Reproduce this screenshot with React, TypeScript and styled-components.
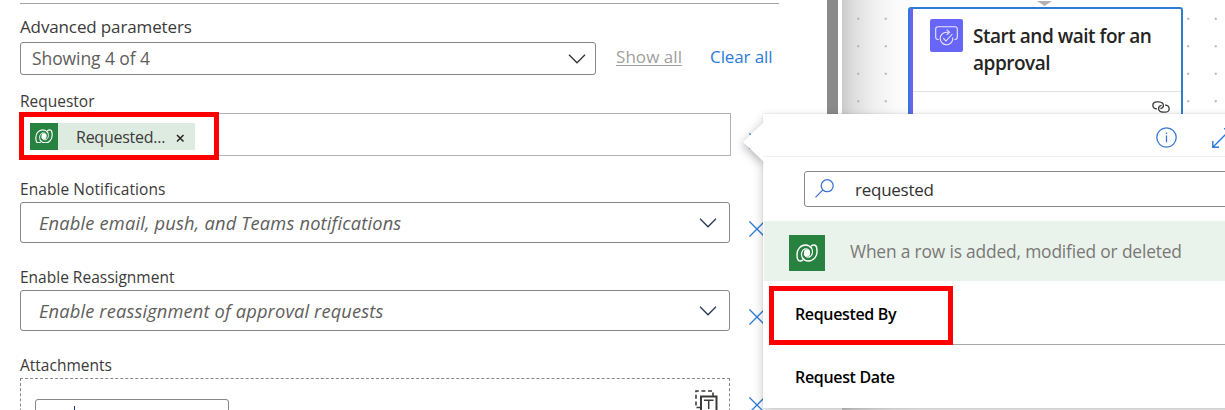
import React from "react";
import styled, { createGlobalStyle } from "styled-components";

const GlobalStyle = createGlobalStyle`
  * { box-sizing: border-box; }
  body {
    margin: 0;
    background: #fff;
    overflow: hidden;
    font-family: "Open Sans", "Noto Sans", sans-serif;
    color: #323130;
  }
`;

const Screen = styled.div`
  position: relative;
  display: flex;
  width: 1225px;
  height: 410px;
  overflow: hidden;
  background: #fff;
`;

const Text = styled.span<{ $size: number; $track?: number; $color?: string; $weight?: number }>`
  font-size: ${(p) => p.$size}px;
  letter-spacing: ${(p) => p.$track ?? 0}px;
  color: ${(p) => p.$color ?? "#3b3a39"};
  font-weight: ${(p) => p.$weight ?? 400};
  line-height: 22px;
  white-space: nowrap;
`;

const Panel = styled.section`
  display: flex;
  flex-direction: column;
  width: 827px;
  padding: 3px 0 0 20px;
  flex: none;
`;

const Rule = styled.div`
  width: 759px;
  height: 1px;
  background: #a3a3a3;
  margin-bottom: 1px;
  flex: none;
`;

const LabelRow = styled.div<{ $height: number; $gap: number }>`
  display: flex;
  align-items: flex-end;
  flex: none;
  height: ${(p) => p.$height}px;
  padding-bottom: ${(p) => p.$gap}px;
`;

const FilterRow = styled.div`
  display: flex;
  height: 33px;
  flex: none;
`;

const Select = styled.div<{ $width: number; $pad: number; $right: number }>`
  display: flex;
  align-items: center;
  justify-content: space-between;
  width: ${(p) => p.$width}px;
  height: 100%;
  padding: 0 ${(p) => p.$right}px 0 ${(p) => p.$pad}px;
  border: 1px solid #8a8886;
  border-radius: 3px;
  flex: none;
`;

const Value = styled(Text)`
  padding-bottom: 2px;
`;

const Hint = styled(Text)`
  font-style: italic;
`;

const LinkButton = styled.button<{ $disabled?: boolean; $gap: number }>`
  border: 0;
  padding: 0 0 4px;
  margin: 0 0 0 ${(p) => p.$gap}px;
  background: none;
  font: 400 17px/22px "Open Sans", sans-serif;
  letter-spacing: ${(p) => (p.$disabled ? 0.06 : -0.13)}px;
  color: ${(p) => (p.$disabled ? "#a19f9d" : "#2b7cd9")};
  text-decoration: ${(p) => (p.$disabled ? "underline" : "none")};
  text-underline-offset: 2px;
  white-space: nowrap;
`;

const FieldRow = styled.div<{ $height: number }>`
  display: flex;
  align-items: center;
  height: ${(p) => p.$height}px;
  flex: none;
`;

const TokenInput = styled.div`
  display: flex;
  align-items: center;
  width: 711px;
  height: 43px;
  padding: 3px 0 0 9px;
  border: 1px solid #b3b3b3;
  flex: none;
`;

const RemoveSlot = styled.div<{ $gap: number; $top: number }>`
  display: flex;
  align-items: center;
  padding-top: ${(p) => p.$top}px;
  margin-left: ${(p) => p.$gap}px;
`;

const Token = styled.span`
  display: flex;
  align-items: center;
  width: 165px;
  height: 27px;
  background: #deebe0;
`;

const Brand = styled.span<{ $w: number; $h: number }>`
  display: flex;
  align-items: center;
  justify-content: center;
  width: ${(p) => p.$w}px;
  height: ${(p) => p.$h}px;
  background: #27823f;
  flex: none;
`;

const TokenText = styled(Text)`
  width: 100px;
  margin-left: 18px;
  padding-top: 2px;
`;

const TokenClose = styled.span`
  line-height: 0;
  padding-top: 4px;
`;

const Attachments = styled.div`
  display: flex;
  justify-content: space-between;
  width: 710px;
  height: 54px;
  padding: 20px 11px 0 14px;
  border: 1px dashed #8a8886;
  flex: none;
`;

const ItemBox = styled.div`
  width: 194px;
  height: 32px;
  padding: 6px 0 0 38px;
  border: 1px solid #8a8886;
  border-radius: 3px;
`;

const Caret = styled.div`
  width: 1px;
  height: 16px;
  background: #1b3a8c;
`;

const ModeIcon = styled.div`
  margin-top: -9px;
  line-height: 0;
`;

const Scrollbar = styled.div`
  width: 15px;
  flex: none;
  background: linear-gradient(to right, #8a8a8a 11px, #fff 11px) 0 0 / 100% 330px no-repeat;
`;

const Canvas = styled.section`
  flex: 1;
  display: flex;
  flex-direction: column;
  background:
    radial-gradient(circle at center, #a0a0a0 0, #b4b4b4 0.8px, transparent 1.2px) 2.5px 5px / 27.5px 27.5px,
    linear-gradient(to right, #cbcbcb 0, #dedede 12px, #f0f0f0 32px, #fafafa 52px, #fff 76px);
`;

const Connector = styled.div`
  height: 7px;
  padding-left: 195px;
  line-height: 0;
`;

const Card = styled.article`
  width: 275px;
  height: 130px;
  margin-left: 65.5px;
  background: #fff;
  border: 2px solid #2f7cd0;
  border-radius: 3px;
  box-shadow: inset 3px 0 0 #6b62f5;
`;

const CardHead = styled.header`
  display: flex;
  height: 83px;
  margin-left: 3px;
  padding: 10px 0 0 17px;
  border-bottom: 1px solid #e1e1e1;
`;

const CardIcon = styled.span`
  width: 33px;
  height: 33px;
  border-radius: 2px;
  background: #6866f8;
  flex: none;
`;

const CardTitle = styled.h3`
  margin: 4px 0 0 10.5px;
  font-size: 19px;
  line-height: 27px;
  font-weight: 600;
  letter-spacing: -0.48px;
  color: #252423;
`;

const CardFoot = styled.footer`
  display: flex;
  justify-content: flex-end;
  padding: 9px 11px 0 0;
`;

const Popover = styled.aside`
  position: absolute;
  left: 763px;
  top: 114px;
  width: 480px;
  height: 294px;
  background: #fff;
  box-shadow: 0 4px 11px rgba(0, 0, 0, 0.2), 0 0 2px rgba(0, 0, 0, 0.12);
`;

const Beak = styled.svg`
  position: absolute;
  left: 735px;
  top: 108px;
  overflow: visible;
  filter: drop-shadow(-1px 3px 4px rgba(0, 0, 0, 0.28));
  clip-path: inset(0 0 -16px -12px);
`;

const PopHead = styled.header`
  display: flex;
  align-items: center;
  height: 43px;
  padding: 5px 0 0 393px;
  gap: 35px;
  border-bottom: 1px solid #f1f1f1;
`;

const SearchBox = styled.div`
  display: flex;
  align-items: center;
  gap: 21px;
  height: 36px;
  margin: 14px 0 14px 41px;
  padding-left: 10px;
  border: 1px solid #8a8886;
  border-radius: 3px;
`;

const SearchMark = styled.span`
  line-height: 0;
  padding-bottom: 2px;
`;

const SearchText = styled(Text)`
  padding-top: 1px;
`;

const Group = styled.div`
  display: flex;
  align-items: center;
  gap: 25px;
  height: 60px;
  margin-left: 1px;
  padding: 4px 0 0 25px;
  background: #e9f3eb;
`;

const GroupText = styled(Text)`
  margin-top: -4px;
`;

const Option = styled.div<{ $line?: boolean }>`
  display: flex;
  align-items: center;
  height: ${(p) => (p.$line ? 64 : 60)}px;
  margin-left: 16px;
  padding: 3px 0 0 16px;
  border-bottom: ${(p) => (p.$line ? "1px solid #a6a6a6" : "0")};
`;

const Highlight = styled.div<{ $x: number; $y: number; $w: number; $h: number }>`
  position: absolute;
  left: ${(p) => p.$x}px;
  top: ${(p) => p.$y}px;
  width: ${(p) => p.$w}px;
  height: ${(p) => p.$h}px;
  border: 5px solid #fe0000;
`;

const Chevron = ({ color = "#323130" }: { color?: string }) => (
  <svg width="18" height="10" viewBox="0 0 18 10" fill="none" stroke={color} strokeWidth="1.25">
    <path d="M1 .8 9 8.8 17 .8" />
  </svg>
);

const Cross = () => (
  <svg width="16" height="16" viewBox="0 0 16 16" fill="none" stroke="#2b7cd9" strokeWidth="1.3">
    <path d="M.4.4 15.6 15.6M15.6.4.4 15.6" />
  </svg>
);

const Swirl = ({ w }: { w: number }) => (
  <svg width={w} height={(w * 18) / 22} viewBox="0 0 22 18" fill="none" stroke="#fff" strokeWidth="1.4" strokeLinecap="round">
    <path d="M15.500 4.200C14 2 12 1 9.500 1 4.500 1 1 5.500 1 10.500 1 15 1.500 17 4 17c1.200 0 2.100-.4 2.700-1" />
    <path d="M6.500 13.800C8 16 10 17 12.500 17 17.500 17 21 12.500 21 7.500 21 3 20.500 1 18 1c-1.200 0-2.100.4-2.700 1" />
    <path d="M6.500 13.800C4.700 10.800 5.300 6.500 8.600 5" strokeWidth="1.200" />
    <path d="M15.500 4.200c1.800 3 1.200 7.300-2.100 8.800" strokeWidth="1.200" />
    <ellipse cx="11" cy="9" rx="3.100" ry="3.700" fill="#fff" stroke="none" />
    <path d="M8.600 5c2-.9 4.400.1 5.100 2.500M13.400 13c-2 .9-4.400-.1-5.100-2.500" strokeWidth="1" />
  </svg>
);

const ApprovalGlyph = () => (
  <svg width="33" height="33" viewBox="0 0 33 33" fill="none" stroke="#e9e8ff" strokeWidth="1.1">
    <path d="M8.800 20.500H8A2.500 2.500 0 0 1 5.700 18V10A2.300 2.300 0 0 1 8 7.700h17A2.300 2.300 0 0 1 27.300 10v8a2.500 2.500 0 0 1-2.300 2.500h-.6" />
    <path d="M18.500 13.200h-2a6.300 6.300 0 1 0 6.200 5.300" />
    <path d="m16.700 10.700 2.800 2.500-2.800 2.600" />
    <path d="m13.200 19.200 2.700 2.800 6.500-7" />
  </svg>
);

const LinkGlyph = () => (
  <svg width="18" height="12" viewBox="0 0 18 12" fill="none" stroke="#3b3a39" strokeWidth="1.300">
    <path d="M5 7.800C2.600 8 .8 6.400.8 4.300.8 2.300 2.500.8 5 .8h2c2.600.2 4.400 1.800 4.400 3.700 0 1.700-1.300 2.900-3 3.100" />
    <path d="M13 4.200c2.400-.2 4.200 1.400 4.200 3.500 0 2-1.700 3.500-4.200 3.500h-2c-2.600-.2-4.400-1.800-4.400-3.700 0-1.700 1.300-2.900 3-3.100" />
  </svg>
);

const InfoGlyph = () => (
  <svg width="21" height="21" viewBox="0 0 21 21" fill="none" stroke="#3478d6" strokeWidth="1.300">
    <circle cx="10.500" cy="10.500" r="9.700" />
    <path d="M10.500 8.600v6.600M10.500 5.600v1.500" />
  </svg>
);

const ExpandGlyph = () => (
  <svg width="20" height="20" viewBox="0 0 20 20" fill="none" stroke="#2b7cd9" strokeWidth="1.400">
    <path d="M.8 13v6.200h6.200M.8 19.200 19.200.8M12 .8h7.200V8" />
  </svg>
);

const SearchGlyph = () => (
  <svg width="19" height="19" viewBox="0 0 19 19" fill="none" stroke="#3f74cf" strokeWidth="1.300">
    <circle cx="12.200" cy="6.700" r="6" />
    <path d="M7.900 10.900.5 18.400" />
  </svg>
);

const DynamicGlyph = () => (
  <svg width="23" height="24" viewBox="0 0 23 24" fill="none" stroke="#3b3a39">
    <path d="M5.500 17.500H1V1h17v5" strokeWidth="1.600" strokeDasharray="4 2.600" />
    <path d="M6 6.600h15.500V23H6z" strokeWidth="2" fill="#fff" />
    <path d="M9 10.200h9.500M13.700 10.200V19" strokeWidth="1.500" />
  </svg>
);

export default function App() {
  return (
    <>
      <GlobalStyle />
      <Screen>
        <Panel>
          <Rule />
          <LabelRow $height={37} $gap={4}>
            <Text $size={17} $track={-0.13}>Advanced parameters</Text>
          </LabelRow>
          <FilterRow>
            <Select $width={576} $pad={11} $right={9}>
              <Value $size={17.5} $track={-0.09} $color="#605e5c">Showing 4 of 4</Value>
              <Chevron />
            </Select>
            <LinkButton $gap={20} $disabled>Show all</LinkButton>
            <LinkButton $gap={28}>Clear all</LinkButton>
          </FilterRow>

          <LabelRow $height={38} $gap={1}>
            <Text $size={15.5}>Requestor</Text>
          </LabelRow>
          <FieldRow $height={43}>
            <TokenInput>
              <Token>
                <Brand $w={28} $h={27}><Swirl w={18} /></Brand>
                <TokenText $size={16} $track={-0.25}>Requested...</TokenText>
                <TokenClose>
                  <svg width="9" height="9" viewBox="0 0 9 9" stroke="#252423" strokeWidth="1.500">
                    <path d="M1 1l6.500 6.500M7.500 1 1 7.500" />
                  </svg>
                </TokenClose>
              </Token>
            </TokenInput>
            <RemoveSlot $gap={18} $top={13}><Cross /></RemoveSlot>
          </FieldRow>

          <LabelRow $height={46} $gap={2}>
            <Text $size={15.5} $track={0.07}>Enable Notifications</Text>
          </LabelRow>
          <FieldRow $height={41}>
            <Select $width={710} $pad={18} $right={12}>
              <Hint $size={18.3} $track={0.17} $color="#605e5c">Enable email, push, and Teams notifications</Hint>
              <Chevron color="#27345e" />
            </Select>
            <RemoveSlot $gap={19} $top={12}><Cross /></RemoveSlot>
          </FieldRow>

          <LabelRow $height={47} $gap={2}>
            <Text $size={15.5}>Enable Reassignment</Text>
          </LabelRow>
          <FieldRow $height={41}>
            <Select $width={710} $pad={18} $right={12}>
              <Hint $size={18.3} $track={0.14} $color="#605e5c">Enable reassignment of approval requests</Hint>
              <Chevron color="#27345e" />
            </Select>
            <RemoveSlot $gap={19} $top={12}><Cross /></RemoveSlot>
          </FieldRow>

          <LabelRow $height={47} $gap={2}>
            <Text $size={15.5}>Attachments</Text>
          </LabelRow>
          <FieldRow $height={54}>
            <Attachments>
              <ItemBox><Caret /></ItemBox>
              <ModeIcon><DynamicGlyph /></ModeIcon>
            </Attachments>
            <RemoveSlot $gap={19} $top={0}><Cross /></RemoveSlot>
          </FieldRow>
        </Panel>

        <Scrollbar />

        <Canvas>
          <Connector>
            <svg width="15" height="5" viewBox="0 0 15 5"><path d="M0 0h15L7.500 5z" fill="#b3b0b8" /></svg>
          </Connector>
          <Card>
            <CardHead>
              <CardIcon><ApprovalGlyph /></CardIcon>
              <CardTitle>Start and wait for an<br />approval</CardTitle>
            </CardHead>
            <CardFoot><LinkGlyph /></CardFoot>
          </Card>
        </Canvas>

        <Popover>
          <PopHead>
            <InfoGlyph />
            <ExpandGlyph />
          </PopHead>
          <SearchBox>
            <SearchMark><SearchGlyph /></SearchMark>
            <SearchText $size={17} $track={-0.25} $color="#323130">requested</SearchText>
          </SearchBox>
          <Group>
            <Brand $w={36} $h={36}><Swirl w={22} /></Brand>
            <GroupText $size={17.4} $track={-0.18} $color="#7a7876">When a row is added, modified or deleted</GroupText>
          </Group>
          <Option $line><Text $size={16} $track={-0.35} $weight={600} $color="#000">Requested By</Text></Option>
          <Option><Text $size={16} $track={-0.33} $weight={600} $color="#000">Request Date</Text></Option>
        </Popover>
        <Beak width="29" height="60" viewBox="0 0 29 60">
          <path d="M29 14 8 34 29 54z" fill="#fff" />
        </Beak>

        <Highlight $x={19} $y={112} $w={200} $h={48} />
        <Highlight $x={769} $y={286} $w={184} $h={59} />
      </Screen>
    </>
  );
}
